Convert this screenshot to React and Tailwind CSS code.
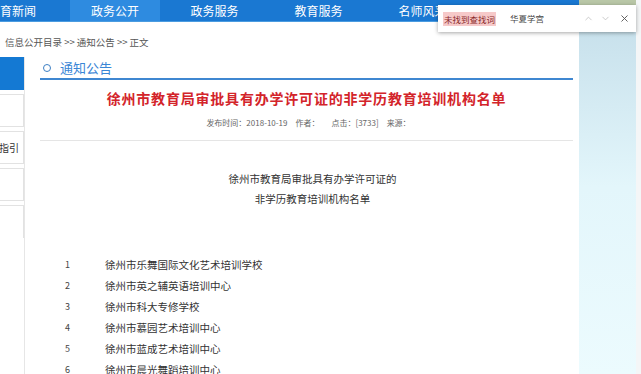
import { ChevronUp, ChevronDown, X } from "lucide-react";

const navItems = ["政务服务", "教育服务", "名师风采", "家有儿女"];

const schools = [
  "徐州市乐舞国际文化艺术培训学校",
  "徐州市英之辅英语培训中心",
  "徐州市科大专修学校",
  "徐州市慕园艺术培训中心",
  "徐州市蓝成艺术培训中心",
  "徐州市晨光舞蹈培训中心",
];

function NavBar() {
  return (
    <div className="flex h-[22px] bg-[#1a78d2] text-[12px] leading-[22px] text-white overflow-hidden border-b border-[#4b9ce0]">
      <div className="w-[70px] shrink-0 overflow-hidden whitespace-nowrap">
        <span className="block -ml-[12px]">教育新闻</span>
      </div>
      <div className="w-[90px] shrink-0 bg-[#2e8be0] text-center">政务公开</div>
      {navItems.map((item) => (
        <div key={item} className="ml-[5px] w-[99px] shrink-0 text-center">
          {item}
        </div>
      ))}
    </div>
  );
}

function FindBar() {
  return (
    <div className="absolute left-[438px] top-[5px] flex h-[27px] w-[198px] items-center bg-white pl-[5px] pr-[6px] shadow-[0_1px_4px_rgba(0,0,0,0.35)]">
      <span className="bg-[#f6c9c9] px-[1px] text-[8.5px] leading-[14px] text-[#8a2a2a]">
        未找到查找词
      </span>
      <span className="ml-[14px] text-[8.5px] text-[#444]">华夏学宫</span>
      <div className="ml-auto flex items-center gap-[6px] text-[#b5b5b5]">
        <ChevronUp size={11} strokeWidth={1.5} />
        <ChevronDown size={11} strokeWidth={1.5} />
        <X size={11} strokeWidth={2} className="ml-[2px] text-[#555]" />
      </div>
    </div>
  );
}

function Sidebar() {
  return (
    <div className="flex w-[25px] shrink-0 flex-col gap-[4px] border-r border-[#e6e6e6]">
      <div className="h-[33px] bg-[#1479d3]" />
      <div className="h-[33px] border-y border-r border-[#e2e2e2]" />
      <div className="flex h-[33px] items-center border-y border-r border-[#e2e2e2] text-[10px] text-[#333]">
        <span className="-ml-[1px]">指引</span>
      </div>
      <div className="h-[33px] border-y border-r border-[#e2e2e2]" />
      <div className="h-[33px] border-t border-r border-[#e2e2e2]" />
    </div>
  );
}

function Article() {
  return (
    <div className="ml-[15px] w-[533px] shrink-0">
      <div className="flex h-[23px] items-center border-b-2 border-[#3f87d1] pl-[3px]">
        <span className="h-[8px] w-[8px] rounded-full border-[1.5px] border-[#3d7fc4]" />
        <span className="ml-[9px] text-[13px] text-[#3a86d6]">通知公告</span>
      </div>
      <h1 className="mt-[6px] text-center text-[14px] font-bold leading-[24px] tracking-[0.8px] text-[#d3242a] font-['Noto_Sans_CJK_SC',serif]">
        徐州市教育局审批具有办学许可证的非学历教育培训机构名单
      </h1>
      <div className="mt-[7px] pb-[11px] text-center text-[8px] text-[#666] border-b border-[#e5e5e5]">
        <span className="ml-[4px]">发布时间：2018-10-19</span>
        <span className="ml-[8px]">作者：</span>
        <span className="ml-[12px]">点击：[3733]</span>
        <span className="ml-[8px]">来源：</span>
      </div>
      <div className="mt-[28px] text-center text-[10.5px] leading-[20px] text-[#333]">
        <div className="ml-[12px]">徐州市教育局审批具有办学许可证的</div>
        <div className="ml-[12px]">非学历教育培训机构名单</div>
      </div>
      <div className="mt-[45px] text-[10.5px] text-[#333]">
        {schools.map((name, i) => (
          <div key={name} className="flex h-[21px] items-center">
            <span className="w-[65px] pl-[25px] text-[9px] text-[#444]">{i + 1}</span>
            <span>{name}</span>
          </div>
        ))}
      </div>
    </div>
  );
}

export default function App() {
  return (
    <div className="relative flex h-[374px] w-[641px] overflow-hidden bg-white font-['Noto_Sans_CJK_SC','Noto_Sans',sans-serif]">
      <div className="w-[579px] shrink-0">
        <NavBar />
        <div className="h-[35px] pl-[5px] pt-[13px] text-[9.5px] text-[#555]">
          信息公开目录 &gt;&gt; 通知公告 &gt;&gt; 正文
        </div>
        <div className="flex">
          <Sidebar />
          <Article />
        </div>
      </div>
      <div className="flex w-[57px] shrink-0 flex-col bg-gradient-to-b from-[#c3dde9] via-[#e3f6fb] to-[#ecfbfe]">
        <div className="h-[6px] bg-[#b9c7a7]" />
      </div>
      <div className="w-[5px] shrink-0 bg-[#f4f6f7]" />
      <FindBar />
    </div>
  );
}
